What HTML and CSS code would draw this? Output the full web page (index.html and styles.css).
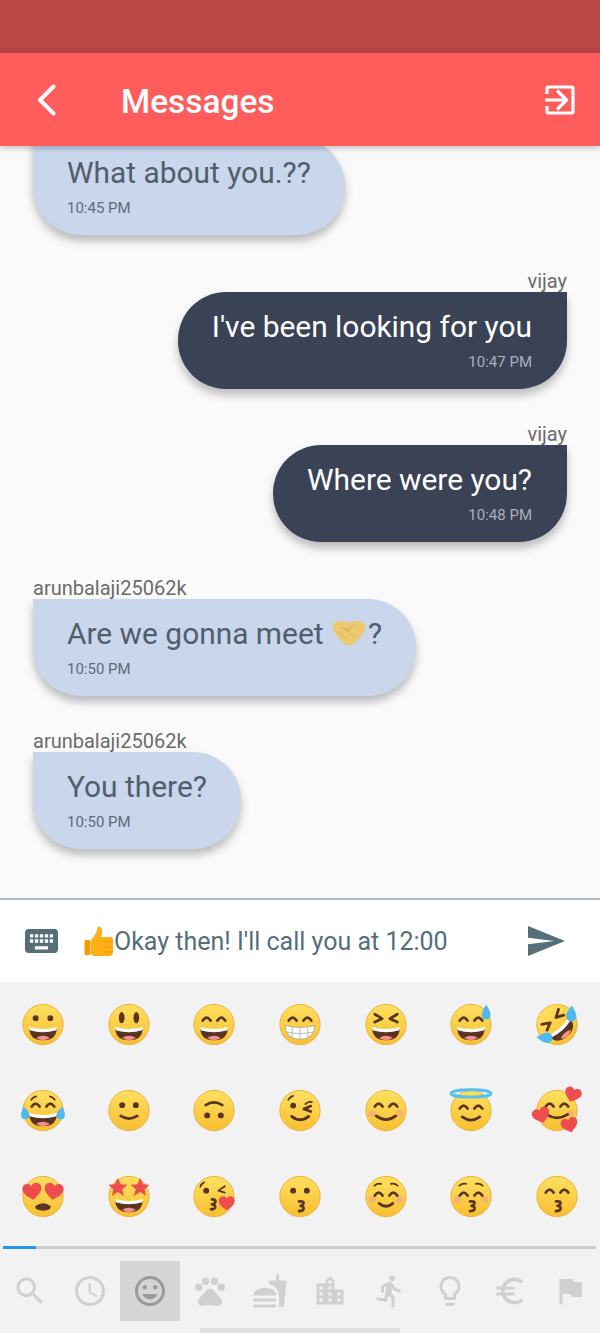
FILE: index.html

```html
<!DOCTYPE html>
<html>
<head>
  <title>Messages</title>
  <link rel="stylesheet" href="styles.css">
</head>
<body>

  <!-- shared emoji parts -->
  <svg class="defs" aria-hidden="true">
    <defs>
      <linearGradient id="skin" x1="0" y1="0" x2="0" y2="1">
        <stop offset="0" stop-color="#fde05f"/>
        <stop offset="1" stop-color="#f8bf32"/>
      </linearGradient>
      <g id="face"><circle cx="22" cy="22" r="20.6" fill="url(#skin)" stroke="#efb03a" stroke-width="1"/></g>
      <g id="mouth">
        <path d="M8 25.500Q22 29.500 36 25.500Q36 38 22 38Q8 38 8 25.500z" fill="#5a3423"/>
        <path d="M7.500 24.500Q22 28.500 36.500 24.500L35.600 28Q22 32 8.400 28z" fill="#fff"/>
        <path d="M15 35.600Q22 31.600 29 35.600Q26 38 22 38Q18 38 15 35.600z" fill="#f48f8f"/>
      </g>
      <g id="arcs"><path class="ln" d="M10.500 18Q14.500 12 18.500 18M25.500 18Q29.500 12 33.500 18"/></g>
      <g id="blush"><circle class="blush" cx="8" cy="25" r="3.600"/><circle class="blush" cx="36" cy="25" r="3.600"/></g>
      <g id="kiss"><path class="ln" d="M21 27Q26.500 26.500 25.500 29.500Q25 31 22.500 31.500Q26.500 32 25.500 35Q25 37 21 37"/></g>
      <path id="heart" d="M0 6.500C-4 3.500-7.500 1-7.500-2.500C-7.500-5-5.500-6.500-3.500-6.500C-2-6.500-.7-5.700 0-4.300C.7-5.700 2-6.500 3.500-6.500C5.500-6.500 7.500-5 7.500-2.500C7.500 1 4 3.500 0 6.500z" fill="#ee4c4f"/>
      <path id="drop" d="M0-6C2.500-2.500 3.500-.5 3.500 1.500A3.500 3.500 0 0 1-3.500 1.500C-3.500-.5-2.500-2.500 0-6z" fill="#4fb8ee"/>
    </defs>
  </svg>

  <div class="status-bar"></div>

  <header class="app-bar">
    <svg class="back" viewBox="0 0 19 32"><path d="M16.500 2.500L3 16l13.500 13.500"/></svg>
    <h1>Messages</h1>
    <svg class="logout" viewBox="0 0 30 30">
      <path d="M2 9V3.500Q2 2 3.500 2h23Q28 2 28 3.500v23q0 1.500-1.500 1.500h-23Q2 28 2 26.500V21"/>
      <path d="M0 15h20M12 5.500l9.500 9.500-9.500 9.500"/>
    </svg>
  </header>

  <main class="chat">
    <div class="msg">
      <div class="bubble">
        <p>What about you.??</p>
        <span class="time">10:45 PM</span>
      </div>
    </div>
    <div class="msg mine">
      <div class="name">vijay</div>
      <div class="bubble">
        <p>I've been looking for you</p>
        <span class="time">10:47 PM</span>
      </div>
    </div>
    <div class="msg mine">
      <div class="name">vijay</div>
      <div class="bubble">
        <p>Where were you?</p>
        <span class="time">10:48 PM</span>
      </div>
    </div>
    <div class="msg">
      <div class="name">arunbalaji25062k</div>
      <div class="bubble">
        <p>Are we gonna meet <svg class="shake" viewBox="0 0 34 26">
          <path d="M1 5Q3 1 9 1Q14 1 17 3Q20 1 25 1Q31 1 33 5Q34 10 30 15Q25 21 20 25Q17 26 14 25Q9 21 4 15Q0 10 1 5z" fill="#ecc96f"/>
          <path d="M9 7l9 4M6 12l9 7M13 9l9 8M22 6l-7 4" fill="none" stroke="#d9b155" stroke-width="1"/>
        </svg>?</p>
        <span class="time">10:50 PM</span>
      </div>
    </div>
    <div class="msg">
      <div class="name">arunbalaji25062k</div>
      <div class="bubble">
        <p>You there?</p>
        <span class="time">10:50 PM</span>
      </div>
    </div>
  </main>

  <div class="composer">
    <svg class="keyboard" viewBox="2 5 20 14" preserveAspectRatio="none"><path d="M20 5H4c-1.100 0-1.990.9-1.990 2L2 17c0 1.100.9 2 2 2h16c1.100 0 2-.9 2-2V7c0-1.100-.9-2-2-2zm-9 3h2v2h-2V8zm0 3h2v2h-2v-2zM8 8h2v2H8V8zm0 3h2v2H8v-2zm-1 2H5v-2h2v2zm0-3H5V8h2v2zm9 7H8v-2h8v2zm0-4h-2v-2h2v2zm0-3h-2V8h2v2zm3 3h-2v-2h2v2zm0-3h-2V8h2v2z"/></svg>
    <div class="draft">
      <svg class="thumb" viewBox="0 0 31 32">
        <path d="M15 1.500Q18.500 1 19 5Q19.500 9 18 12H27.500Q30 12 30 15V27Q30 31 26 31H13Q9 31 8 29V15Q13 10 15 1.500z" fill="#fcb017"/>
        <rect x="1.500" y="15" width="6" height="15" rx="1.500" fill="#f59c00"/>
        <path d="M21 17h9M21 22h9M21 27h8" stroke="#f29500" stroke-width="1"/>
      </svg>Okay then! I'll call you at 12:00
    </div>
    <svg class="send" viewBox="2 3 21 18" preserveAspectRatio="none"><path d="M2.010 21L23 12 2.010 3 2 10l15 2-15 2z"/></svg>
  </div>

  <section class="picker">
    <div class="emoji-grid">
      <svg class="emoji" viewBox="0 0 44 44"><use href="#face"/><circle class="ink" cx="14.500" cy="15.500" r="3"/><circle class="ink" cx="29.500" cy="15.500" r="3"/><use href="#mouth"/></svg>
      <svg class="emoji" viewBox="0 0 44 44"><use href="#face"/><ellipse class="ink" cx="14.500" cy="15" rx="2.900" ry="5.800"/><ellipse class="ink" cx="29.500" cy="15" rx="2.900" ry="5.800"/><use href="#mouth"/></svg>
      <svg class="emoji" viewBox="0 0 44 44"><use href="#face"/><use href="#arcs"/><use href="#mouth"/></svg>
      <svg class="emoji" viewBox="0 0 44 44"><use href="#face"/><use href="#arcs"/><path d="M7 23Q22 27 37 23Q37 37 22 37Q7 37 7 23z" fill="#fff" stroke="#8b8b8b" stroke-width=".6"/><path d="M7.500 29.500Q22 33 36.500 29.500M14 25v11.500M22 26v11M30 25v11.500" fill="none" stroke="#b5b5b5"/></svg>
      <svg class="emoji" viewBox="0 0 44 44"><use href="#face"/><path class="ln" d="M10.500 11.500L18 16 10.500 19.500M33.500 11.500L26 16 33.500 19.500"/><use href="#mouth"/></svg>
      <svg class="emoji" viewBox="0 0 44 44"><use href="#face"/><use href="#arcs"/><use href="#mouth"/><use href="#drop" transform="translate(37.500 10) scale(1.250 1.400)"/></svg>
      <svg class="emoji" viewBox="0 0 44 44"><g transform="rotate(-42 22 22)"><use href="#face"/><path class="ln" d="M10.500 11.500L18 16 10.500 19.500M33.500 11.500L26 16 33.500 19.500"/><use href="#mouth"/><use href="#drop" transform="translate(4 24) rotate(-45) scale(1.500)"/><use href="#drop" transform="translate(40 24) rotate(45) scale(1.500)"/></g></svg>

      <svg class="emoji" viewBox="0 0 44 44"><use href="#face"/><path class="ln thin" d="M10 11Q12 8 15 7.500M34 11Q32 8 29 7.500"/><use href="#arcs"/><use href="#mouth"/><use href="#drop" transform="translate(3.500 25) rotate(-10) scale(1.200)"/><use href="#drop" transform="translate(40.500 25) rotate(10) scale(1.200)"/></svg>
      <svg class="emoji" viewBox="0 0 44 44"><use href="#face"/><circle class="ink" cx="15" cy="16.500" r="3"/><circle class="ink" cx="29" cy="16.500" r="3"/><path class="ln" d="M13.500 27.500Q22 33 30.500 27.500"/></svg>
      <svg class="emoji" viewBox="0 0 44 44"><use href="#face"/><circle class="ink" cx="15" cy="27" r="3"/><circle class="ink" cx="29" cy="27" r="3"/><path class="ln" d="M13.500 16.500Q22 11 30.500 16.500"/></svg>
      <svg class="emoji" viewBox="0 0 44 44"><use href="#face"/><path class="ln thin" d="M10 11Q12 8 15 7M34 13.500Q30 12.500 27.500 15.500"/><circle class="ink" cx="15" cy="17" r="3"/><path class="ln" d="M26 20.500L33 17.500M26 20.500L33 23"/><path class="ln" d="M13.500 28Q22 35 31 28"/></svg>
      <svg class="emoji" viewBox="0 0 44 44"><use href="#face"/><use href="#blush"/><use href="#arcs"/><path class="ln" d="M12 27.500Q22 35 32 27.500"/></svg>
      <svg class="emoji" viewBox="0 0 44 44"><use href="#face"/><ellipse cx="22" cy="4.500" rx="20.500" ry="3.800" fill="none" stroke="#58c0ef" stroke-width="3"/><use href="#arcs" transform="translate(0 2)"/><path class="ln" d="M13 28.500Q22 35 31 28.500"/></svg>
      <svg class="emoji" viewBox="0 0 44 44"><use href="#face"/><use href="#blush"/><use href="#arcs"/><path class="ln" d="M11 26Q22 33 33 26"/><use href="#heart" transform="translate(38 6) rotate(20) scale(1.150)"/><use href="#heart" transform="translate(6 27) rotate(-20) scale(1.200)"/><use href="#heart" transform="translate(35 37) rotate(-15) scale(1.150)"/></svg>

      <svg class="emoji" viewBox="0 0 44 44"><use href="#face"/><use href="#heart" transform="translate(11 17) rotate(-8) scale(1.300)"/><use href="#heart" transform="translate(33 17) rotate(8) scale(1.300)"/><path d="M14 32Q22 26 30 32Q30 36.500 22 36.500Q14 36.500 14 32z" fill="#5a3423"/></svg>
      <svg class="emoji" viewBox="0 0 44 44"><use href="#face"/><polygon class="star" points="10.500,3 13.500,9.500 20.500,10 15,14.500 17,21.500 10.500,17.500 4.500,21.500 6,14.500 1,10 7.500,9.500"/><polygon class="star" points="33.500,3 36.500,9.500 43,10 38,14.500 39.500,21.500 33.500,17.500 27,21.500 29,14.500 23.500,10 30.500,9.500"/><use href="#mouth"/></svg>
      <svg class="emoji" viewBox="0 0 44 44"><use href="#face"/><path class="ln thin" d="M8 12Q9 9 12 7.500M33 11.500L26.500 16 33 18"/><circle class="ink" cx="14" cy="16" r="3"/><path class="ln" d="M20 25Q25 25 23 28.500Q22 29.500 20 30Q24 30.500 23 33.500Q22 35.500 19 35"/><use href="#heart" transform="translate(35 29) scale(1.100)"/></svg>
      <svg class="emoji" viewBox="0 0 44 44"><use href="#face"/><circle class="ink" cx="15" cy="16" r="3"/><circle class="ink" cx="29" cy="16" r="3"/><use href="#kiss"/></svg>
      <svg class="emoji" viewBox="0 0 44 44"><use href="#face"/><use href="#blush"/><path class="ln thin" d="M10 11Q13 8 17 9M34 11Q31 8 27 9"/><use href="#arcs" transform="translate(0 3)"/><path class="ln" d="M15 29Q22 35 29 29"/></svg>
      <svg class="emoji" viewBox="0 0 44 44"><use href="#face"/><use href="#blush"/><path class="ln thin" d="M10 11Q13 8 17 9M34 11Q31 8 27 9"/><use href="#arcs" transform="translate(0 3)"/><use href="#kiss"/></svg>
      <svg class="emoji" viewBox="0 0 44 44"><use href="#face"/><use href="#arcs"/><use href="#kiss"/></svg>
    </div>

    <div class="pages"><div class="pages-fill"></div></div>

    <nav class="tabs">
      <div class="tab"><svg viewBox="0 0 24 24"><path d="M15.500 14h-.79l-.28-.27C15.410 12.590 16 11.110 16 9.500 16 5.910 13.090 3 9.500 3S3 5.910 3 9.500 5.910 16 9.500 16c1.610 0 3.090-.59 4.230-1.570l.27.28v.79l5 4.990L20.490 19l-4.990-5zm-6 0C7.010 14 5 11.990 5 9.500S7.010 5 9.500 5 14 7.010 14 9.500 11.990 14 9.500 14z"/></svg></div>
      <div class="tab"><svg viewBox="0 0 24 24"><path d="M11.990 2C6.470 2 2 6.480 2 12s4.470 10 9.990 10C17.520 22 22 17.520 22 12S17.520 2 11.990 2zM12 20c-4.420 0-8-3.580-8-8s3.580-8 8-8 8 3.580 8 8-3.580 8-8 8zm.5-13H11v6l5.250 3.150.75-1.230-4.500-2.670z"/></svg></div>
      <div class="tab active"><svg viewBox="0 0 24 24"><path d="M11.990 2C6.470 2 2 6.480 2 12s4.470 10 9.990 10C17.520 22 22 17.520 22 12S17.520 2 11.990 2zM12 20c-4.420 0-8-3.580-8-8s3.580-8 8-8 8 3.580 8 8-3.580 8-8 8zm3.500-9c.83 0 1.500-.67 1.500-1.500S16.330 8 15.500 8 14 8.670 14 9.500s.67 1.500 1.500 1.500zm-7 0c.83 0 1.500-.67 1.500-1.500S9.330 8 8.500 8 7 8.670 7 9.500 7.670 11 8.500 11zm3.500 6.500c2.330 0 4.310-1.460 5.110-3.500H6.890c.8 2.040 2.780 3.500 5.110 3.500z"/></svg></div>
      <div class="tab"><svg viewBox="0 0 24 24"><circle cx="4.500" cy="9.500" r="2.500"/><circle cx="9" cy="5.500" r="2.500"/><circle cx="15" cy="5.500" r="2.500"/><circle cx="19.500" cy="9.500" r="2.500"/><path d="M17.340 14.860c-.87-1.020-1.600-1.890-2.480-2.910-.46-.54-1.050-1.080-1.750-1.320-.11-.04-.22-.07-.33-.09-.25-.04-.52-.04-.78-.04s-.53 0-.79.050c-.11.020-.22.050-.33.090-.7.240-1.280.780-1.750 1.320-.87 1.020-1.600 1.890-2.480 2.910-1.310 1.310-2.920 2.760-2.620 4.790.29 1.020 1.020 2.030 2.330 2.320.73.150 3.060-.44 5.540-.44h.18c2.480 0 4.810.58 5.540.44 1.310-.29 2.040-1.310 2.330-2.320.31-2.040-1.300-3.490-2.610-4.800z"/></svg></div>
      <div class="tab"><svg viewBox="0 0 24 24"><path d="M18.060 22.990h1.660c.84 0 1.530-.64 1.630-1.460L23 5.050h-5V1h-1.970v4.050h-4.970l.3 2.340c1.710.47 3.310 1.320 4.270 2.260 1.440 1.420 2.430 2.890 2.430 5.290v8.050zM1 21.990V21h15.030v.99c0 .55-.45 1-1.010 1H2.010c-.56 0-1.010-.45-1.010-1zm15.030-7c.5-4-4.490-4.990-7.510-4.990C5.500 10 1 10.990 1 15h15.030zM1.020 17h15v2h-15z"/></svg></div>
      <div class="tab"><svg viewBox="0 0 24 24"><path d="M15 11V5l-3-3-3 3v2H3v14h18V11h-6zm-8 8H5v-2h2v2zm0-4H5v-2h2v2zm0-4H5V9h2v2zm6 8h-2v-2h2v2zm0-4h-2v-2h2v2zm0-4h-2V9h2v2zm0-4h-2V5h2v2zm6 12h-2v-2h2v2zm0-4h-2v-2h2v2z"/></svg></div>
      <div class="tab"><svg viewBox="0 0 24 24"><path d="M13.490 5.480c1.100 0 2-.9 2-2s-.9-2-2-2-2 .9-2 2 .9 2 2 2zm-3.600 13.900l1-4.400 2.100 2v6h2v-7.500l-2.100-2 .6-3c1.300 1.500 3.300 2.500 5.500 2.500v-2c-1.900 0-3.500-1-4.300-2.400l-1-1.600c-.4-.6-1-1-1.700-1-.3 0-.5.1-.8.1l-5.200 2.200v4.700h2v-3.400l1.800-.7-1.600 8.100-4.900-1-.4 2 7 1.400z"/></svg></div>
      <div class="tab"><svg viewBox="0 0 24 24"><path d="M9 21c0 .55.45 1 1 1h4c.55 0 1-.45 1-1v-1H9v1zm3-19C8.140 2 5 5.140 5 9c0 2.380 1.190 4.470 3 5.740V17c0 .55.45 1 1 1h6c.55 0 1-.45 1-1v-2.260c1.810-1.270 3-3.360 3-5.740 0-3.860-3.140-7-7-7zm2.850 11.100l-.85.6V16h-4v-2.300l-.85-.6C7.800 12.160 7 10.630 7 9c0-2.760 2.240-5 5-5s5 2.240 5 5c0 1.630-.8 3.160-2.150 4.100z"/></svg></div>
      <div class="tab"><svg viewBox="0 0 24 24"><path d="M15 18.500c-2.510 0-4.680-1.420-5.760-3.500H15v-2H8.580c-.05-.33-.08-.66-.08-1s.03-.67.08-1H15V9H9.240C10.320 6.920 12.500 5.500 15 5.500c1.610 0 3.090.59 4.230 1.570L21 5.300C19.410 3.870 17.300 3 15 3c-3.920 0-7.240 2.510-8.480 6H3v2h3.060c-.04.33-.06.66-.06 1 0 .34.02.67.06 1H3v2h3.520c1.240 3.490 4.560 6 8.480 6 2.310 0 4.410-.87 6-2.300l-1.780-1.770c-1.130.98-2.600 1.570-4.220 1.570z"/></svg></div>
      <div class="tab"><svg viewBox="0 0 24 24"><path d="M14.400 6L14 4H5v17h2v-7h5.600l.4 2h7V6z"/></svg></div>
    </nav>

    <div class="home-bar"></div>
  </section>

</body>
</html>
```

FILE: styles.css

```css
html, body {
  margin: 0;
  height: 1333px;
  overflow: hidden;
}
body {
  display: flex;
  flex-direction: column;
  font-family: Roboto, "Liberation Sans", sans-serif;
  background: #fafafa;
}
.defs {
  display: block;
  width: 0;
  height: 0;
}

.status-bar {
  height: 53px;
  flex: none;
  background: #bc4646;
}
.app-bar {
  height: 93px;
  flex: none;
  display: flex;
  align-items: center;
  padding: 0 25px 0 37px;
  background: #ff5c5c;
  box-shadow: 0 2px 6px rgba(0,0,0,0.25);
  position: relative;
  z-index: 2;
}
.app-bar h1 {
  flex: 1;
  margin: 3px 0 0 65px;
  font-size: 33.400px;
  font-weight: 500;
  color: white;
}
.back {
  width: 19px;
  height: 32px;
  fill: none;
  stroke: white;
  stroke-width: 4;
  stroke-linecap: round;
  stroke-linejoin: round;
}
.logout {
  width: 30px;
  height: 30px;
  fill: none;
  stroke: white;
  stroke-width: 3.200;
  stroke-linejoin: round;
}

.chat {
  flex: 1;
  min-height: 0;
  display: flex;
  flex-direction: column;
  justify-content: flex-end;
  overflow: hidden;
  padding: 0 33px 49px;
}
.msg {
  display: flex;
  flex-direction: column;
  align-items: flex-start;
  flex: none;
  margin-top: 34.400px;
}
.msg.mine {
  align-items: flex-end;
}
.name {
  font-size: 20px;
  line-height: 22px;
  color: #6b6b6b;
}
.bubble {
  height: 97px;
  box-sizing: border-box;
  padding: 17px 34px 0;
  background: #c9d6ec;
  color: #515e6c;
  border-radius: 0 48px 48px 48px;
  box-shadow: 0 6px 9px rgba(0,0,0,0.25);
}
.mine .bubble {
  padding-right: 35px;
  background: #3a4256;
  color: white;
  border-radius: 48px 0 48px 48px;
  text-align: right;
}
.bubble p {
  margin: 0;
  font-size: 29.900px;
  line-height: 36px;
  white-space: nowrap;
}
.time {
  display: block;
  margin-top: 8px;
  font-size: 15px;
  line-height: 18px;
  color: #5f6b7c;
}
.mine .time {
  color: #aab0bc;
}
.shake {
  width: 34px;
  height: 26px;
  margin: 0 2px 0 1px;
  vertical-align: -2px;
}

.composer {
  height: 82px;
  flex: none;
  display: flex;
  align-items: center;
  padding: 0 35px 0 25px;
  background: white;
  border-top: 2px solid #a9bbc3;
}
.keyboard {
  width: 33px;
  height: 24px;
  flex: none;
  fill: #546e7a;
}
.draft {
  flex: 1;
  display: flex;
  align-items: center;
  margin-left: 25px;
  font-size: 25px;
  color: #546e7a;
  white-space: nowrap;
}
.thumb {
  width: 31px;
  height: 32px;
  flex: none;
}
.send {
  width: 37px;
  height: 30px;
  flex: none;
  fill: #546e7a;
}

.picker {
  height: 351px;
  flex: none;
  background: #f2f2f2;
}
.emoji-grid {
  display: grid;
  grid-template-columns: repeat(7, 1fr);
  grid-auto-rows: 86px;
  place-items: center;
  height: 258px;
}
.emoji {
  width: 44px;
  height: 43px;
  margin-bottom: 2px;
  overflow: visible;
}
.ink {
  fill: #5a3423;
}
.ln {
  fill: none;
  stroke: #5a3423;
  stroke-width: 2.800;
  stroke-linecap: round;
  stroke-linejoin: round;
}
.ln.thin {
  stroke-width: 1.800;
}
.blush {
  fill: #f4a58a;
  opacity: 0.7;
}
.star {
  fill: #ee4c4f;
}

.pages {
  height: 3px;
  margin: 6px 4px 0 3px;
  background: #cdcdcd;
}
.pages-fill {
  width: 33px;
  height: 3px;
  background: #2196f3;
}
.tabs {
  display: flex;
  margin-top: 12px;
}
.tab {
  width: 60px;
  height: 60px;
  display: flex;
  align-items: center;
  justify-content: center;
}
.tab svg {
  width: 36px;
  height: 36px;
  fill: #d0d0d0;
}
.tab.active {
  background: #d5d5d5;
}
.tab.active svg {
  fill: #9a9a9a;
}
.home-bar {
  width: 200px;
  height: 5px;
  margin: 7px auto 0;
  background: #e0e0e0;
}
```
